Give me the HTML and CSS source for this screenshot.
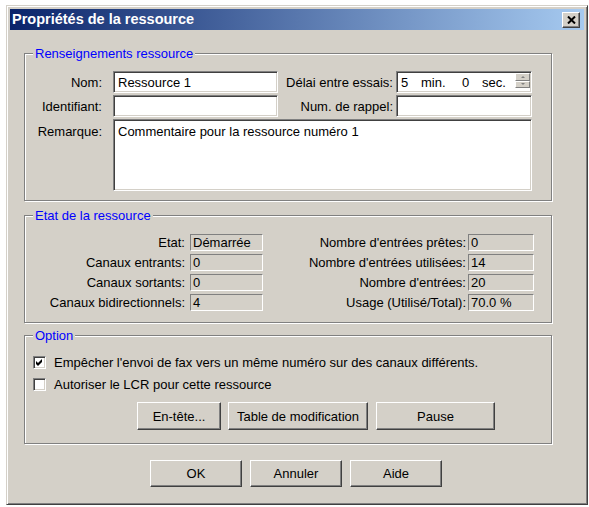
FILE: index.html
```html
<!DOCTYPE html>
<html lang="fr">
<head>
<meta charset="utf-8">
<title>Propriétés de la ressource</title>
<link rel="stylesheet" href="styles.css">
</head>
<body>
<div class="window">
  <div class="titlebar">
    <span class="title">Propriétés de la ressource</span>
    <span class="close"><svg width="9" height="8" viewBox="0 0 9 8"><path d="M1 0.5 L8 7.5 M8 0.5 L1 7.5" stroke="#000" stroke-width="2" fill="none"/></svg></span>
  </div>
  <div class="client">
    <div class="group g1">
      <div class="legend">Renseignements ressource</div>
      <div class="grid1">
        <div class="lbl c1">Nom:</div>
        <div class="field">Ressource 1</div>
        <div class="lbl c3">Délai entre essais:</div>
        <div class="field spin">
          <span class="s1">5</span><span class="s2">min.</span><span class="s3">0</span><span class="s4">sec.</span>
          <span class="spinbtns"><span class="sb"><i class="up"></i></span><span class="sb"><i class="down"></i></span></span>
        </div>
        <div class="lbl c1">Identifiant:</div>
        <div class="field"></div>
        <div class="lbl c3">Num. de rappel:</div>
        <div class="field"></div>
        <div class="lbl c1 top">Remarque:</div>
        <div class="field area">Commentaire pour la ressource numéro 1</div>
      </div>
    </div>

    <div class="group g2">
      <div class="legend">Etat de la ressource</div>
      <div class="grid2">
        <div class="lbl d1">Etat:</div><div class="ro">Démarrée</div>
        <div class="lbl d3">Nombre d'entrées prêtes:</div><div class="ro">0</div>
        <div class="lbl d1">Canaux entrants:</div><div class="ro">0</div>
        <div class="lbl d3">Nombre d'entrées utilisées:</div><div class="ro">14</div>
        <div class="lbl d1">Canaux sortants:</div><div class="ro">0</div>
        <div class="lbl d3">Nombre d'entrées:</div><div class="ro">20</div>
        <div class="lbl d1">Canaux bidirectionnels:</div><div class="ro">4</div>
        <div class="lbl d3">Usage (Utilisé/Total):</div><div class="ro">70.0 %</div>
      </div>
    </div>

    <div class="group g3">
      <div class="legend">Option</div>
      <div class="chk">
        <span class="cb"><svg width="7" height="7" viewBox="0 0 7 7"><path d="M0 2 L2 4 L6 0 L6 3 L2 7 L0 5 Z" fill="#000"/></svg></span>
        <span>Empêcher l'envoi de fax vers un même numéro sur des canaux différents.</span>
      </div>
      <div class="chk">
        <span class="cb"></span>
        <span>Autoriser le LCR pour cette ressource</span>
      </div>
      <div class="optbtns">
        <div class="btn b1">En-tête...</div>
        <div class="btn b2">Table de modification</div>
        <div class="btn b3">Pause</div>
      </div>
    </div>

    <div class="actions">
      <div class="btn act">OK</div>
      <div class="btn act">Annuler</div>
      <div class="btn act">Aide</div>
    </div>
  </div>
</div>
</body>
</html>
```
FILE: styles.css
```css
* { box-sizing: border-box; }
html, body { margin: 0; padding: 0; }
body {
  background: #fff;
  font-family: "Liberation Sans", Arial, sans-serif;
  font-size: 13px;
  line-height: 15px;
  color: #000;
  width: 589px;
  height: 507px;
  overflow: hidden;
}
.window {
  margin: 5px 0 0 6px;
  width: 582px;
  height: 500px;
  background: #d4d0c8;
  border: 1px solid;
  border-color: #d4d0c8 #404040 #404040 #d4d0c8;
  box-shadow: inset 1px 1px 0 #fff, inset -1px -1px 0 #808080;
  padding: 3px;
}
.titlebar {
  height: 21px;
  background: linear-gradient(to right, #0a246a, #a6caf0);
  display: flex;
  align-items: center;
  justify-content: space-between;
  padding: 0 4px 0 2px;
}
.title {
  color: #fff;
  font-weight: bold;
  font-size: 14.5px;
  line-height: 21px;
  white-space: nowrap;
}
.close {
  width: 18px;
  height: 16px;
  background: #d4d0c8;
  border: 1px solid;
  border-color: #fff #404040 #404040 #fff;
  box-shadow: inset -1px -1px 0 #808080;
  display: flex;
  align-items: center;
  justify-content: center;
}
.client { padding: 23px 0 0 14px; }
.group {
  position: relative;
  width: 528px;
  border: 1px solid #808080;
  box-shadow: inset 1px 1px 0 #fff, 1px 1px 0 #fff;
}
.legend {
  position: absolute;
  top: -8px;
  left: 8px;
  padding: 0 2px;
  background: #d4d0c8;
  color: #0000ff;
  white-space: nowrap;
}
.lbl { white-space: nowrap; text-align: right; align-self: center; }

/* group 1 */
.g1 { height: 148px; padding-top: 17px; }
.grid1 {
  display: grid;
  grid-template-columns: 88px 165px 118px 136px;
  grid-template-rows: 22px 22px 72px;
  row-gap: 2px;
}
.c1 { padding-right: 11px; }
.c3 { padding-right: 3px; }
.lbl.top { align-self: start; padding-top: 5px; }
.field {
  background: #fff;
  border: 1px solid;
  border-color: #808080 #fff #fff #808080;
  box-shadow: inset 1px 1px 0 #404040, inset -1px -1px 0 #d4d0c8;
  padding: 0 3px 0 4px;
  display: flex;
  align-items: center;
  white-space: nowrap;
}
.field.area { grid-column: 2 / 5; align-items: flex-start; padding-top: 4px; }
.field.spin { padding-right: 0; }
.s1 { width: 20px; }
.s2 { width: 41px; }
.s3 { width: 20px; }
.s4 { flex: 1; }
.spinbtns {
  width: 15px;
  height: 15px;
  margin-right: 1px;
  align-self: flex-start;
  margin-top: 1px;
  display: flex;
  flex-direction: column;
}
.sb {
  flex: 1;
  background: #d4d0c8;
  border: 1px solid;
  border-color: #fff #808080 #808080 #fff;
  display: flex;
  align-items: center;
  justify-content: center;
}
.sb i { width: 0; height: 0; border-left: 2px solid transparent; border-right: 2px solid transparent; }
.sb .up { border-bottom: 2px solid #808080; }
.sb .down { border-top: 2px solid #808080; }

/* group 2 */
.g2 { margin-top: 14px; height: 108px; padding-top: 18px; }
.grid2 {
  display: grid;
  grid-template-columns: 165px 73px 205px 66px;
  grid-auto-rows: 17px;
  row-gap: 3px;
}
.d1 { padding-right: 5px; }
.d3 { padding-right: 2px; }
.ro {
  border: 1px solid;
  border-color: #808080 #fff #fff #808080;
  padding-left: 2px;
  display: flex;
  align-items: center;
  white-space: nowrap;
}

/* group 3 */
.g3 { margin-top: 12px; height: 109px; padding: 18px 0 0 8px; }
.chk {
  height: 17px;
  display: flex;
  align-items: center;
  gap: 8px;
  white-space: nowrap;
}
.chk + .chk { margin-top: 5px; }
.cb {
  width: 13px;
  height: 13px;
  background: #fff;
  border: 1px solid;
  border-color: #808080 #fff #fff #808080;
  box-shadow: inset 1px 1px 0 #404040, inset -1px -1px 0 #d4d0c8;
  display: flex;
  align-items: center;
  justify-content: center;
  flex-shrink: 0;
}
.optbtns { display: flex; margin: 9px 0 0 104px; }
.btn {
  height: 28px;
  background: #d4d0c8;
  border: 1px solid;
  border-color: #fff #404040 #404040 #fff;
  box-shadow: inset -1px -1px 0 #808080;
  display: flex;
  align-items: center;
  justify-content: center;
  white-space: nowrap;
}
.b1 { width: 84px; }
.b2 { width: 140px; margin-left: 7px; }
.b3 { width: 119px; margin-left: 8px; }

.actions { display: flex; gap: 8px; margin: 16px 0 0 126px; }
.btn.act { width: 92px; height: 27px; }
```
